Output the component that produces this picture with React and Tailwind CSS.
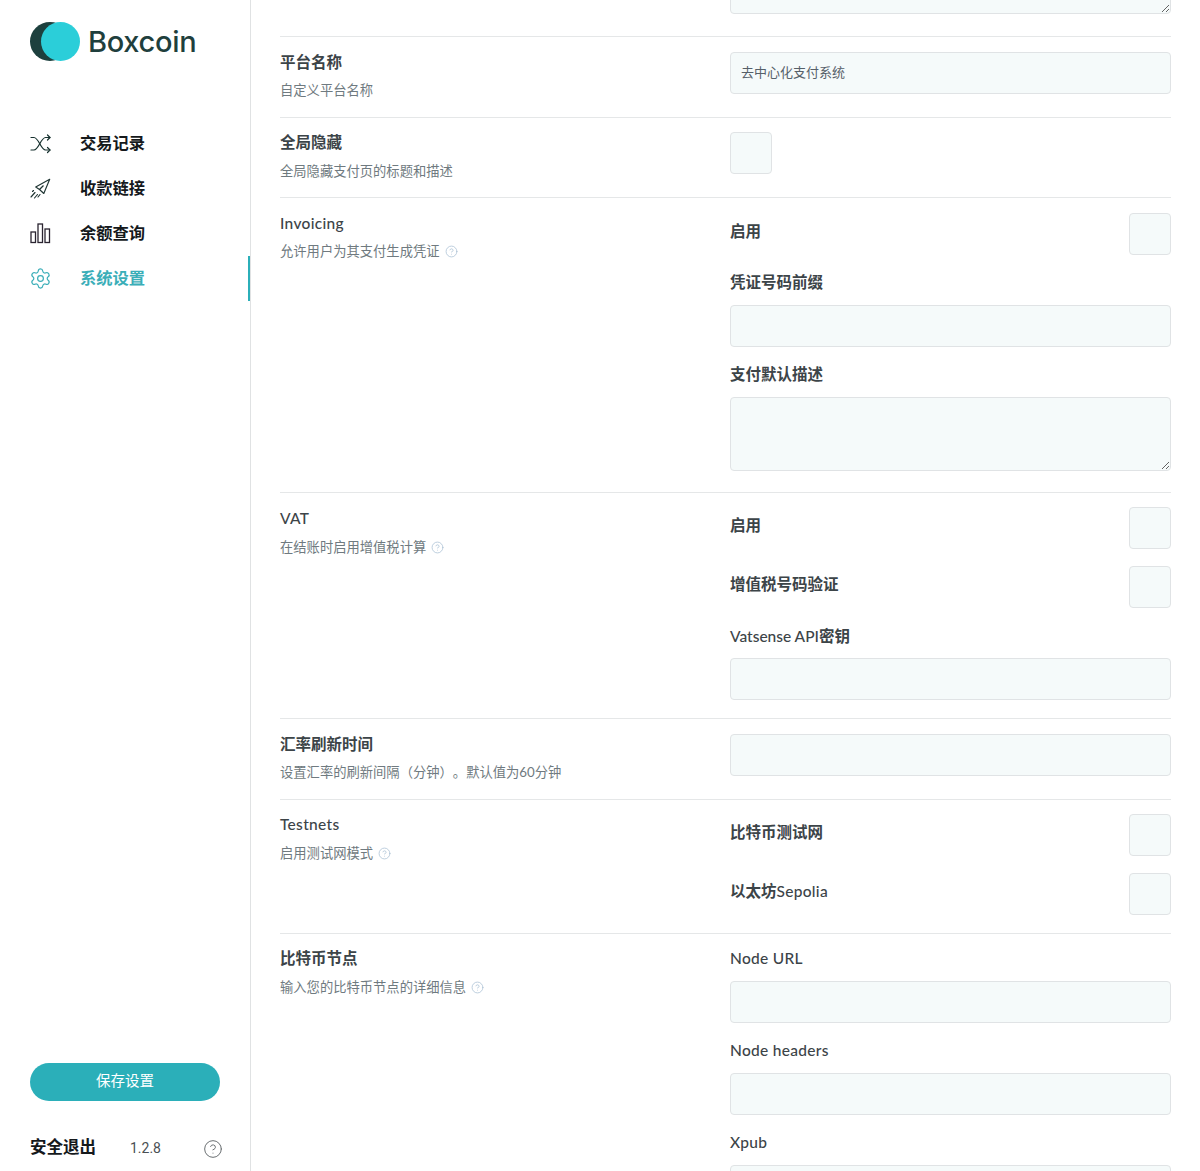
import { CircleHelp, Settings } from "lucide-react";

const fontStack = "font-['Lato','Noto_Sans_CJK_SC',sans-serif]";

const ShuffleIcon = () => (
  <svg width="21" height="21" viewBox="0 0 21 21" fill="none" stroke="#16302e" strokeWidth="1.2" strokeLinecap="round" strokeLinejoin="round">
    <path d="M1 4.5 H4 C8.5 4.5 11 17 15.5 17 H20" />
    <path d="M1 17 H4 C8.5 17 11 4.5 15.5 4.5 H20" />
    <path d="M17.5 2 L20 4.5 L17.5 7" />
    <path d="M17.5 14.5 L20 17 L17.5 19.5" />
  </svg>
);

const RocketIcon = () => (
  <svg width="21" height="21" viewBox="0 0 21 21" fill="none" stroke="#1f3533" strokeWidth="1.15" strokeLinejoin="round">
    <path d="M19.7 1.3 L5.7 9 L9.5 11.5 L13.8 15.5 Z" />
    <path d="M9.5 11.5 L13.5 7.5" />
    <path d="M5 14.5 L1 19 M7.5 16.5 L4.5 20 M3.5 12.5 L2.5 13.5 M10 16.5 L8 19" strokeLinecap="round" />
  </svg>
);

const BarsIcon = () => (
  <svg width="21" height="21" viewBox="0 0 21 21" fill="none" stroke="#2a2430" strokeWidth="1.3">
    <rect x="1" y="9" width="4.5" height="10.5" />
    <rect x="8" y="1" width="4.5" height="18.5" />
    <rect x="15" y="6" width="4.5" height="13.5" />
  </svg>
);

const navItems = [
  { label: "交易记录", icon: <ShuffleIcon /> },
  { label: "收款链接", icon: <RocketIcon /> },
  { label: "余额查询", icon: <BarsIcon /> },
  { label: "系统设置", icon: <Settings size={23} strokeWidth={1.25} color="#3aaeb8" className="-ml-[1px]" />, active: true },
];

const Input = ({ value }) => (
  <input
    readOnly
    value={value || ""}
    className="block h-[42px] w-full rounded-[4px] border-[1.5px] border-[#e0e3e5] bg-[#f5fafa] px-[10px] pb-[3px] text-[13px] text-[#566069] outline-none"
  />
);

const Textarea = ({ className }) => (
  <textarea
    readOnly
    className={`block w-full rounded-[4px] border-[1.5px] border-[#e0e3e5] bg-[#f5fafa] outline-none ${className}`}
  />
);

const Box = () => (
  <div className="h-[42px] w-[42px] rounded-[4px] border-[1.5px] border-[#e0e3e5] bg-[#f5fafa]" />
);

// the latin face has no bold in the original, only the cjk part gets heavy
const Latin = ({ children }) => <span className="font-medium tracking-[0.3px]">{children}</span>;

const Title = ({ children }) => (
  <div className="text-[15.5px] font-bold leading-[22px] text-[#3c4448]">{children}</div>
);

const Desc = ({ children, help, tight }) => (
  <div className={`flex items-center gap-[5px] text-[13.3px] leading-[22px] text-[#6f7a80] [text-spacing-trim:space-all] ${tight ? "mt-[6px]" : "mt-[7px]"}`}>
    {children}
    {help && <CircleHelp size={13} strokeWidth={1.4} color="#a9c0d4" />}
  </div>
);

const Row = ({ title, desc, help, tight, children, className, leftClass }) => (
  <div className={`flex border-t-[1.5px] border-[#e5e7e8] ${className}`}>
    <div className={`w-[450px] shrink-0 ${leftClass}`}>
      <Title>{title}</Title>
      <Desc help={help} tight={tight}>{desc}</Desc>
    </div>
    <div className="flex-1">{children}</div>
  </div>
);

const ToggleLine = ({ label, className }) => (
  <div className={`flex h-[42px] items-start justify-between ${className || ""}`}>
    <div className="pt-[7px]"><Title>{label}</Title></div>
    <Box />
  </div>
);

const App = () => {
  return (
    <div className={`flex h-[1171px] overflow-hidden bg-white ${fontStack}`}>
      <aside className="flex w-[251px] shrink-0 flex-col border-r-[1.5px] border-[#e0e2e3]">
        <div className="flex items-center pl-[30px] pt-[22px]">
          <svg width="50" height="39" viewBox="0 0 50 39">
            <ellipse cx="20" cy="19.5" rx="20" ry="19.5" fill="#1d403e" />
            <circle cx="30.5" cy="19.5" r="19.5" fill="#2bced9" />
          </svg>
          <span className="ml-[8px] font-['Inter',sans-serif] text-[29px] font-medium leading-[39px] tracking-[-0.3px] text-[#1f3f3d]">Boxcoin</span>
        </div>
        <nav className="mt-[60px]">
          {navItems.map((item) => (
            <div
              key={item.label}
              className={`flex h-[45px] items-center pl-[30px] ${item.active ? "border-r-[2.5px] border-[#2bafb9]" : ""}`}
            >
              <span className="flex w-[50px] items-center">{item.icon}</span>
              <span className={`text-[16.3px] font-bold ${item.active ? "text-[#3aaeb8]" : "text-[#15191c]"}`}>
                {item.label}
              </span>
            </div>
          ))}
        </nav>
        <button className="ml-[30px] mt-auto h-[38px] w-[190px] rounded-full bg-[#2bafb9] pb-[2px] text-[14.5px] text-white">
          保存设置
        </button>
        <div className="mb-[11px] mt-[34px] flex items-center pl-[30px]">
          <span className="w-[100px] text-[16.5px] font-bold text-[#15191c]">安全退出</span>
          <span className="mt-[1px] font-['Roboto',sans-serif] text-[14px] text-[#4a4f53]">1.2.8</span>
          <CircleHelp size={20} strokeWidth={1.2} color="#6a6f72" className="ml-[42px] mt-[3px]" />
        </div>
      </aside>

      <main className="flex-1 overflow-hidden pl-[29px] pr-[29px]">
        <div className="flex justify-end">
          <div className="w-[441px]">
            <Textarea className="-mt-[60px] h-[74px]" />
          </div>
        </div>
        <Row title="平台名称" desc="自定义平台名称" tight className="mt-[22px] h-[81px] pt-[15px]" leftClass="-mt-[1px]">
          <Input value="去中心化支付系统" />
        </Row>
        <Row title="全局隐藏" desc="全局隐藏支付页的标题和描述" className="h-[80px] pt-[14px]" leftClass="-mt-[1px]">
          <Box />
        </Row>
        <Row title={<Latin>Invoicing</Latin>} desc="允许用户为其支付生成凭证" help tight className="h-[295px] pt-[15px]" leftClass="-mt-[1px]">
          <ToggleLine label="启用" />
          <div className="mt-[16px]"><Title>凭证号码前缀</Title></div>
          <div className="mt-[12px]"><Input /></div>
          <div className="mt-[16px]"><Title>支付默认描述</Title></div>
          <div className="mt-[12px]"><Textarea className="h-[74px]" /></div>
        </Row>
        <Row title={<Latin>VAT</Latin>} desc="在结账时启用增值税计算" help className="h-[226px] pt-[14px]">
          <ToggleLine label="启用" />
          <ToggleLine label="增值税号码验证" className="mt-[17px]" />
          <div className="mt-[17px]"><Title><span className="font-medium">Vatsense API</span>密钥</Title></div>
          <div className="mt-[11px]"><Input /></div>
        </Row>
        <Row title="汇率刷新时间" desc="设置汇率的刷新间隔（分钟）。默认值为60分钟" tight className="h-[81px] pt-[15px]" leftClass="-mt-[1px]">
          <Input />
        </Row>
        <Row title={<Latin>Testnets</Latin>} desc="启用测试网模式" help className="h-[134px] pt-[14px]" leftClass="-mt-[1px]">
          <ToggleLine label="比特币测试网" />
          <ToggleLine label={<>以太坊<Latin>Sepolia</Latin></>} className="mt-[17px]" />
        </Row>
        <Row title="比特币节点" desc="输入您的比特币节点的详细信息" help className="pt-[13px]">
          <Title><Latin>Node URL</Latin></Title>
          <div className="mt-[12px]"><Input /></div>
          <div className="mt-[16px]"><Title><Latin>Node headers</Latin></Title></div>
          <div className="mt-[12px]"><Input /></div>
          <div className="mt-[16px]"><Title><Latin>Xpub</Latin></Title></div>
          <div className="mt-[12px]"><Input /></div>
        </Row>
      </main>
    </div>
  );
};

export default App;
